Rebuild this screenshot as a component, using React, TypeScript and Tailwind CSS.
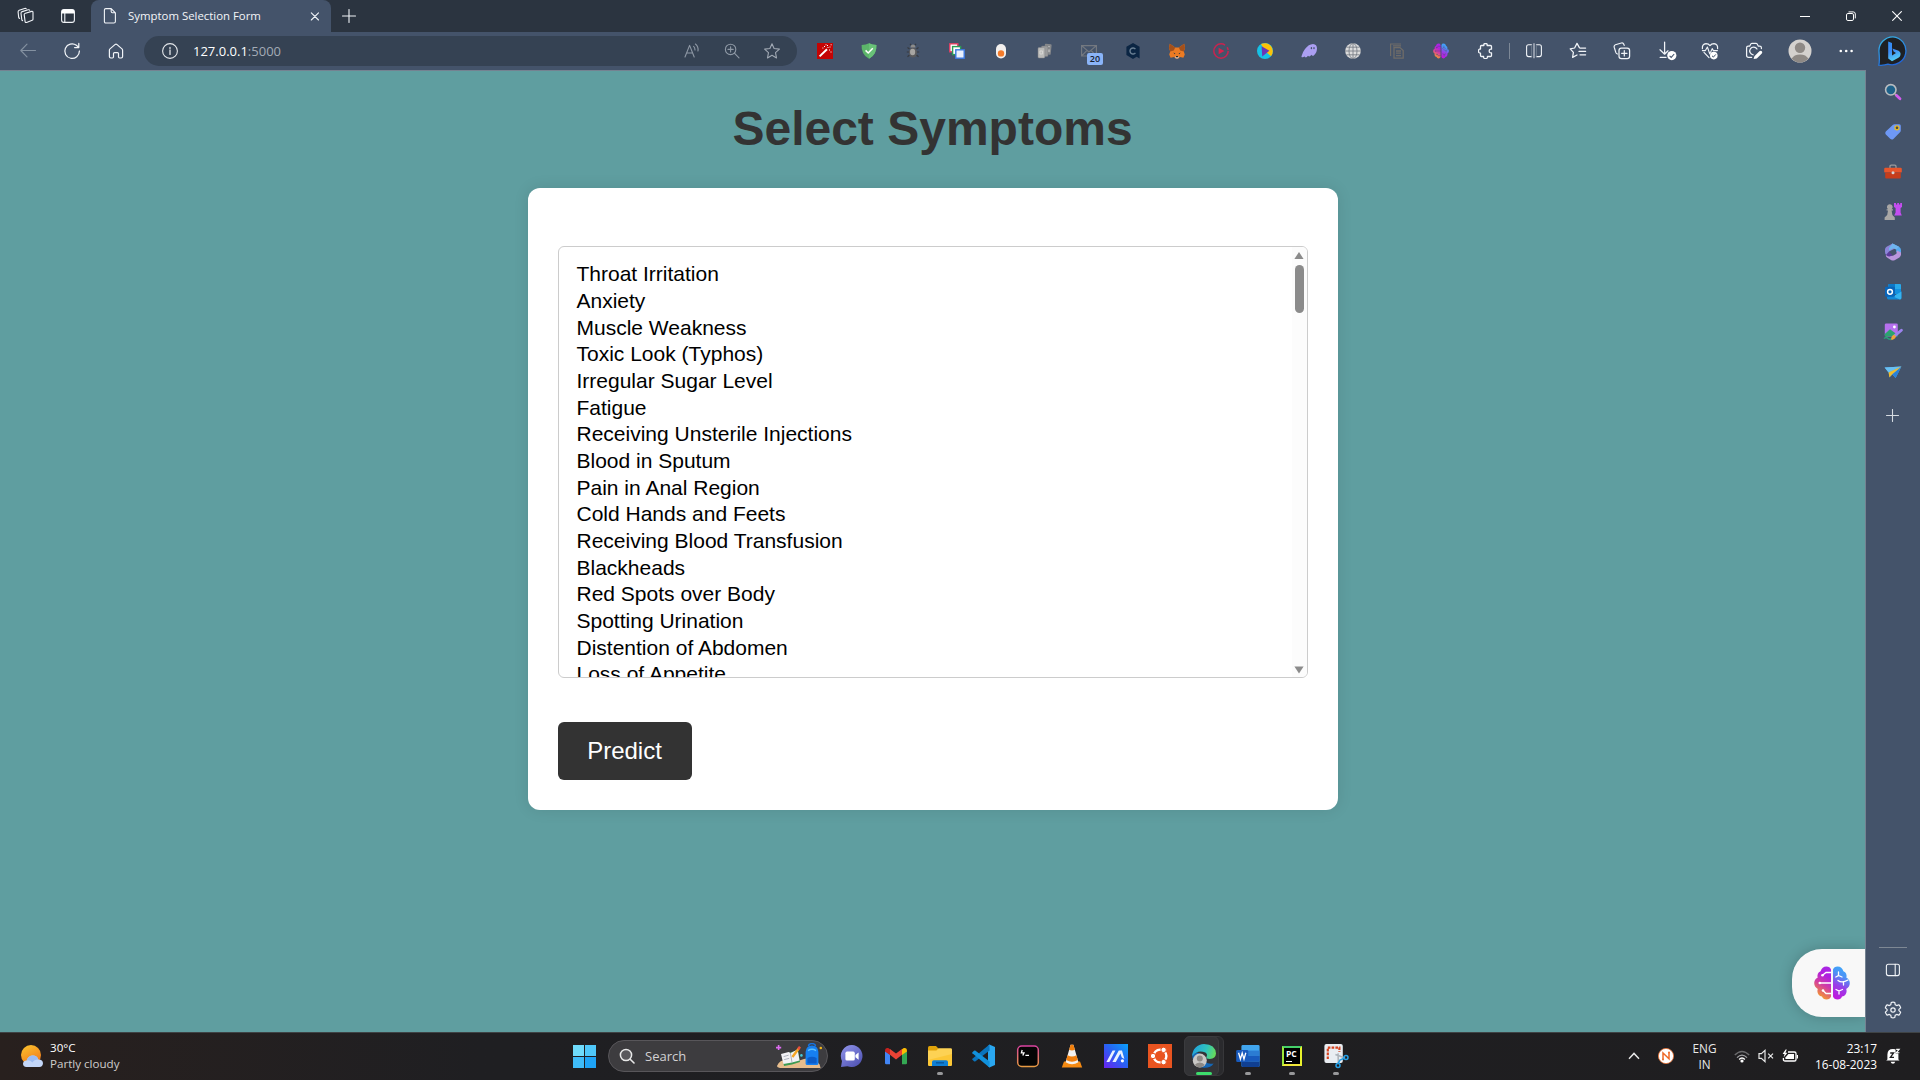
import React from "react";

type SvgProps = { w: number; h?: number; vb?: string; className?: string; children: React.ReactNode };

function Svg({ w, h = w, vb, className = "", children }: SvgProps) {
  return (
    <svg width={w} height={h} viewBox={vb ?? `0 0 ${w} ${h}`} fill="none" className={`block shrink-0 ${className}`}>
      {children}
    </svg>
  );
}

const line = { stroke: "#f1f4f8", strokeWidth: 1.1, strokeLinecap: "round" as const, strokeLinejoin: "round" as const };

function Cell({ children, className = "w-11" }: { children?: React.ReactNode; className?: string }) {
  return <div className={`flex h-full shrink-0 items-center justify-center ${className}`}>{children}</div>;
}

function TabBar() {
  return (
    <div className="flex h-8 shrink-0 items-stretch bg-[#2b3440]">
      <div className="flex w-[91px] items-center pl-[17px]">
        <Svg w={18}>
          <g {...line}>
            <path d="M8.5 6.2 L14.6 4.4 Q16 4 16 5.4 V12.2 Q16 13 15.2 13.3 L9.6 15.4 Q8.3 15.8 8.1 14.6 L7.2 7.6 Q7.2 6.6 8.5 6.2Z" />
            <path d="M5.6 13.6 Q4.9 13.4 4.8 12.6 L4 6.2 Q4 5 5.2 4.6 L11.2 2.8 Q12.4 2.5 12.7 3.2" />
            <path d="M2.6 11.4 Q1.8 11.2 1.7 10.4 L1.1 5 Q1 3.8 2.2 3.3 L7.6 1.5 Q8.8 1.2 9.2 1.8" />
          </g>
        </Svg>
        <Svg w={16} className="ml-[25px]">
          <rect x="1.6" y="1.6" width="12.8" height="12.8" rx="2.4" {...line} />
          <path d="M1.6 5.5V4Q1.6 1.6 4 1.6H12Q14.4 1.6 14.4 4V5.5Z" fill="#fff" />
          <path d="M4.8 5V14" {...line} />
        </Svg>
      </div>
      <div className="flex w-[240px] items-center rounded-t-lg bg-[#44536a] pr-[10px] pl-3">
        <Svg w={14} h={18}>
          <path d="M2.8 1.6H8.2L12.4 5.8V14.4Q12.4 16 10.8 16H2.8Q1.4 16 1.4 14.6V3Q1.4 1.6 2.8 1.6ZM8.2 1.6V4.6Q8.2 5.8 9.4 5.8H12.4" {...line} />
        </Svg>
        <span className="ml-[11px] grow text-[11.4px] leading-4 whitespace-nowrap text-[#f3f5f8]">Symptom Selection Form</span>
        <Svg w={12}>
          <path d="M2.3 2.8L9.5 10M9.5 2.8L2.3 10" {...line} />
        </Svg>
      </div>
      <Cell className="w-[35px]">
        <Svg w={14}>
          <path d="M7 .5V13.5M.5 7H13.5" {...line} />
        </Svg>
      </Cell>
      <div className="grow" />
      <Cell className="w-[46px]">
        <Svg w={10}><path d="M0 5.5H10" stroke="#fff" /></Svg>
      </Cell>
      <Cell className="w-[46px]">
        <Svg w={10}>
          <rect x=".5" y="2.5" width="7" height="7" rx="1.4" stroke="#fff" />
          <path d="M2.5 .9H7.2Q9.3 .9 9.3 3V7.4" stroke="#fff" />
        </Svg>
      </Cell>
      <Cell className="w-[46px]">
        <Svg w={10}><path d="M.3 .3L9.7 9.7M9.7 .3L.3 9.7" stroke="#fff" strokeWidth="1.1" /></Svg>
      </Cell>
    </div>
  );
}

function Brain({ size }: { size: number }) {
  const id = `brain${size}`;
  const small = size < 20;
  return (
    <Svg w={size} vb="0 0 36 34">
      <defs>
        <linearGradient id={`${id}a`} x1="4" y1="30" x2="22" y2="2" gradientUnits="userSpaceOnUse">
          <stop stopColor="#f59a2c" />
          <stop offset=".35" stopColor="#d33fa0" />
          <stop offset=".65" stopColor="#b01fe0" />
          <stop offset="1" stopColor="#a52be6" />
        </linearGradient>
        <linearGradient id={`${id}b`} x1="18" y1="30" x2="32" y2="4" gradientUnits="userSpaceOnUse">
          <stop stopColor="#c018dc" />
          <stop offset=".4" stopColor="#9a3de8" />
          <stop offset=".75" stopColor="#4d92f5" />
          <stop offset="1" stopColor="#3fa4fa" />
        </linearGradient>
      </defs>
      <path d="M17 3.5V30.5Q16 33.5 12.5 33.6Q9 33.5 8 30.5Q3.6 29.8 3.4 25.2Q3.4 24 3.8 23Q.2 20.8 .2 17Q.4 13 3.6 11.8Q2.6 7 6.6 5.2Q8 .5 12.4 .4Q16 .5 17 3.5Z" fill={`url(#${id}a)`} />
      <path d="M19 3.5V30.5Q20 33.5 23.5 33.6Q27 33.5 28 30.5Q32.4 29.8 32.6 25.2Q32.6 24 32.2 23Q35.8 20.8 35.8 17Q35.6 13 32.4 11.8Q33.4 7 29.4 5.2Q28 .5 23.6 .4Q20 .5 19 3.5Z" fill={`url(#${id}b)`} />
      <g stroke={small ? "#44536a" : "#fff"} strokeWidth={1.3} strokeLinecap="round" opacity={small ? 0.7 : 1}>
        <path d="M17 6.5H12L8.5 9.3M17 17H6M17 27.5H12L9 24.5" />
        <path d="M24.5 6V9.5L21.8 11M24.5 9.5L28 11M24 14.5Q28 17.5 34 14M29.5 16V19M22 23.5L25 25L28.5 23.5M25 25V28" />
      </g>
      <g fill={small ? "#44536a" : "#fff"} opacity={small ? 0.7 : 1}>
        <circle cx="8.5" cy="9.3" r="1.3" /><circle cx="5.8" cy="17" r="1.3" /><circle cx="9" cy="24.5" r="1.3" />
      </g>
    </Svg>
  );
}

function Extensions() {
  return (
    <>
      <Cell>
        <Svg w={16}>
          <rect width="16" height="16" fill="#c40404" />
          <path d="M2.6 13.4L10 6.2" stroke="#fff" strokeWidth="2" />
          <path d="M7 3.5h1M10 2.5h1M12.5 4h1M12 7h1M13.5 9h1M5.4 5h1M10.5 4.5h1M8.5 1.8h1M13.6 1.8h1" stroke="#fff" />
        </Svg>
      </Cell>
      <Cell>
        <Svg w={16}>
          <path d="M8 .3Q11 1.8 15.4 2Q16 11.5 8 15.8Q0 11.5 .6 2Q5 1.8 8 .3Z" fill="#5cb56a" />
          <path d="M8 .3Q11 1.8 15.4 2Q16 11.5 8 15.8Z" fill="#69c178" />
          <path d="M4.6 7.4L7.2 10L11.8 5.2" stroke="#fff" strokeWidth="1.5" />
        </Svg>
      </Cell>
      <Cell>
        <Svg w={16}>
          <path d="M4.5 6L2.5 4.5M4 9H1.8M4.5 12L2.5 13.8M11.5 6L13.5 4.5M12 9H14.2M11.5 12L13.5 13.8M6 2L5 .8M10 2L11 .8" stroke="#383b40" strokeWidth="1.2" />
          <ellipse cx="8" cy="9.6" rx="4" ry="5" fill="#5a5a5c" />
          <ellipse cx="7.6" cy="9" rx="2.6" ry="3.2" fill="#a7a5a2" />
          <path d="M5.4 4.4Q5.8 1.4 8 1.4Q10.2 1.4 10.6 4.4Z" fill="#8d8c8a" />
        </Svg>
      </Cell>
      <Cell>
        <Svg w={16}>
          <rect x=".8" y=".8" width="8" height="8" fill="#fff" stroke="#e23d62" strokeWidth="1.4" />
          <rect x="3.6" y="3.6" width="8" height="8" fill="#fff" stroke="#2c9c56" strokeWidth="1.4" />
          <rect x="6.8" y="6.8" width="8.4" height="8.4" fill="#e9f0fd" stroke="#3b78e0" strokeWidth="1.4" />
        </Svg>
      </Cell>
      <Cell>
        <Svg w={16}>
          <rect x="3" y="1" width="10" height="14.4" rx="5" fill="#f3f0ee" />
          <circle cx="8" cy="10.4" r="3.2" fill="#f47b2a" />
        </Svg>
      </Cell>
      <Cell>
        <Svg w={16}>
          <rect x="7.4" y="1" width="6.8" height="10.5" rx="1" fill="#85878a" transform="rotate(6 10 6)" />
          <rect x="4.4" y="3" width="6.6" height="10.5" rx="1" fill="#9a9b9c" stroke="#717479" strokeWidth=".5" />
          <rect x="1" y="4.6" width="6.8" height="10.4" rx="1" fill="#bbbbb9" stroke="#818386" strokeWidth=".5" />
          <path d="M3 8h2.6v3H3zM12 3v1.2M12 6.4v2.8" stroke="#d7d6d4" />
        </Svg>
      </Cell>
      <Cell>
        <div className="relative h-4 w-4">
          <Svg w={16}>
            <path d="M.6 2.6H15.4V13H.6ZM.6 2.6L8 9L15.4 2.6M.6 13L6 7.4M15.4 13L10 7.4" stroke="#737880" strokeWidth="1.2" />
          </Svg>
          <div className="absolute top-[10px] left-[6px] flex h-3 w-4 items-center justify-center rounded-xs bg-[#8ab4f8] text-[9px] leading-3 font-semibold text-[#16202e]">
            20
          </div>
        </div>
      </Cell>
      <Cell>
        <Svg w={16}>
          <path d="M8 0L14.6 3.8V15.6L11.6 13.8L8 16L1.4 12V3.8Z" fill="#0b2543" />
          <path d="M10.4 6.2A3 3 0 1 0 10.4 9.8" stroke="#6b8094" strokeWidth="1.4" />
        </Svg>
      </Cell>
      <Cell>
        <Svg w={16}>
          <path d="M.8 .8L6.2 4.6H9.8L15.2 .8L16 5L14.8 8.4L15.8 11.4L14.4 14.8L11 14L9.2 15.6H6.8L5 14L1.6 14.8L.2 11.4L1.2 8.4L0 5Z" fill="#ec7b23" />
          <path d="M.8 .8L6.2 4.6L4.8 7.6L1.2 8.4L0 5ZM15.2 .8L9.8 4.6L11.2 7.6L14.8 8.4L16 5Z" fill="#a3501b" />
          <path d="M4.4 9.4L6.4 10.4L5.6 11.2ZM11.6 9.4L9.6 10.4L10.4 11.2Z" fill="#233447" />
          <path d="M6.6 13.2H9.4L9.8 14.8L9 15.6H7L6.2 14.8Z" fill="#d5c4b6" />
          <path d="M6.9 13H9.1L8.8 14.2H7.2Z" fill="#222" />
        </Svg>
      </Cell>
      <Cell>
        <Svg w={16}>
          <circle cx="8" cy="8" r="7.2" stroke="#c8234f" strokeWidth="1.5" strokeDasharray="38 3 3 2" />
          <path d="M5.6 4.8L11.4 8L5.6 11.2Z" fill="#d9204c" />
        </Svg>
      </Cell>
      <Cell>
        <Svg w={16}>
          <circle cx="8" cy="8" r="8" fill="#16c1e6" />
          <path d="M4 1.1A8 8 0 0 1 14 13.2L9 9L5 3Z" fill="#fcc208" />
          <path d="M4.6 3.2L12.4 7.8L5.2 13.4Z" fill="#6a35b5" />
        </Svg>
      </Cell>
      <Cell>
        <Svg w={16}>
          <path d="M.4 13.4Q1.6 9 4 6Q7.6 1.2 12 1Q16 1.4 16 5.6Q15.8 10 12.8 12.4Q11.2 13.2 10.4 11.8Q8.6 14.4 7 12.8Q4.8 15.6 3.6 13.6Q1 15 .4 13.4Z" fill="#ab9ff2" />
          <ellipse cx="10.4" cy="5.2" rx=".7" ry="1.1" fill="#44536a" /><ellipse cx="13" cy="5.2" rx=".7" ry="1.1" fill="#44536a" />
        </Svg>
      </Cell>
      <Cell>
        <Svg w={16}>
          <circle cx="8" cy="8" r="7.8" fill="#dcdcdc" />
          <path d="M0 8H16M8 0V16M1.4 4.2H14.6M1.4 11.8H14.6" stroke="#7b8088" strokeWidth=".9" />
          <ellipse cx="8" cy="8" rx="4" ry="7.6" stroke="#7b8088" strokeWidth=".9" />
        </Svg>
      </Cell>
      <Cell>
        <Svg w={16}>
          <path d="M1.6 13V1H12M4 2.8H12" stroke="#6f6c68" strokeWidth="1.2" />
          <path d="M5 4.6H11L14.2 7.6V15.2H5ZM7 8H12M7 10.2H12M7 12.6H12" stroke="#6f6c68" strokeWidth="1.3" />
        </Svg>
      </Cell>
      <Cell><Brain size={16} /></Cell>
      <Cell>
        <Svg w={16} className="ml-[2px]">
          <path d="M3.4 2.5H5.9Q5.4 .5 7.5 .5Q9.6 .5 9.1 2.5H12.4Q13.5 2.5 13.5 3.6V6.2Q11.2 5.8 11.2 8Q11.2 10.2 13.5 9.8V12.4Q13.5 13.5 12.4 13.5H9.4Q9.8 15.6 7.5 15.6Q5.2 15.6 5.6 13.5H3.5Q2.5 13.5 2.5 12.4V10.2Q.5 10.2 .5 8Q.5 5.8 2.5 6V3.5Q2.5 2.5 3.4 2.5Z" {...line} strokeWidth="1.3" />
        </Svg>
      </Cell>
    </>
  );
}

function Toolbar() {
  return (
    <div className="flex h-[38px] shrink-0 items-center bg-[#44536a] pl-[6px]">
      <Cell>
        <Svg w={16}><path d="M15.5 7.5H.8M7 1.2L.8 7.5L7 13.8" {...line} stroke="#8491a1" /></Svg>
      </Cell>
      <Cell>
        <Svg w={18}>
          <path d="M16.4 9A7.3 7.3 0 1 1 13.4 3.2L15.6 5.4M15.8 1.4V5.6H11.6" {...line} strokeWidth="1.25" />
        </Svg>
      </Cell>
      <Cell>
        <Svg w={16}>
          <path d="M1.4 7.2Q1.4 6.4 2 5.9L7.2 1.4Q8 .8 8.8 1.4L14 5.9Q14.6 6.4 14.6 7.2V13.6Q14.6 15 13.2 15H11.6Q10.5 15 10.5 13.8V10.6Q10.5 9.6 9.5 9.6H6.5Q5.5 9.6 5.5 10.6V13.8Q5.5 15 4.4 15H2.8Q1.4 15 1.4 13.6Z" {...line} strokeWidth="1.2" />
        </Svg>
      </Cell>
      <div className="mx-[6px] flex h-[30px] w-[653px] shrink-0 items-center rounded-full bg-[#354253] pr-[5px] pl-[17px]">
        <Svg w={18}>
          <circle cx="9" cy="9" r="7.4" {...line} stroke="#e4e7eb" />
          <path d="M9 8V12.4M9 5.4V6.4" {...line} stroke="#e4e7eb" strokeWidth="1.3" />
        </Svg>
        <div className="ml-[14px] grow text-[13px] leading-4 text-white">
          127.0.0.1<span className="text-[#a3abb6]">:5000</span>
        </div>
        <Cell className="w-10">
          <Svg w={16}>
            <path d="M1 14L5.6 2.4L10.2 14M2.6 10H8.6" {...line} stroke="#8e98a5" />
            <path d="M9.6 3.4Q11 4.6 11 7M11.4 1Q14.6 3.4 14 8" {...line} stroke="#8e98a5" />
          </Svg>
        </Cell>
        <Cell className="w-10">
          <Svg w={16}>
            <circle cx="6.6" cy="6.4" r="5.2" {...line} stroke="#8e98a5" />
            <path d="M10.4 10.2L15 14.8M6.6 3.8V9M4 6.4H9.2" {...line} stroke="#8e98a5" />
          </Svg>
        </Cell>
        <Cell className="w-10">
          <Svg w={18}>
            <path d="M9 1.8L11.1 6.5L16.4 7.1L12.5 10.7L13.5 15.9L9 13.3L4.5 15.9L5.5 10.7L1.6 7.1L6.9 6.5Z" {...line} stroke="#a0a8b3" />
          </Svg>
        </Cell>
      </div>
      <Extensions />
      <Cell className="w-[5px]"><div className="h-4 w-px bg-[#7d8896]" /></Cell>
      <Cell>
        <Svg w={16}>
          <path d="M5.6 1.8H2.6Q.6 1.8 .6 3.8V11.6Q.6 13.6 2.6 13.6H5.6M10.4 1.8H13.4Q15.4 1.8 15.4 3.8V11.6Q15.4 13.6 13.4 13.6H10.4" {...line} stroke="#f1f4f8" />
          <path d="M5.6 1.8V13.6M10.4 1.8V13.6" stroke="#6d7a8c" />
          <path d="M8 .2V15.2" stroke="#c6ccd5" strokeWidth="1.2" />
        </Svg>
      </Cell>
      <Cell>
        <Svg w={18}>
          <path d="M10.4 5.6L8 1.4L5.6 6L1.2 6.8L4.4 10.3L3.6 15.4L8 13" {...line} strokeWidth="1.25" />
          <path d="M11 6H16.6M10 9.4H16.6M11 12.8H16.6" {...line} strokeWidth="1.25" />
        </Svg>
      </Cell>
      <Cell>
        <Svg w={18}>
          <rect x="6" y="6" width="10.6" height="10.6" rx="2.4" {...line} strokeWidth="1.25" />
          <path d="M11.3 8.6V14M8.6 11.3H14M4.4 12Q3.2 11.6 2.8 10.4L1.2 5.2Q.8 3.4 2.4 2.8L8.4 1Q10.2 .6 10.8 2.2L11.2 3.4" {...line} strokeWidth="1.2" />
        </Svg>
      </Cell>
      <Cell>
        <Svg w={18} h={20} className="ml-1">
          <path d="M5.6 1V13M1 8.8L5.6 13.2L9 9.8M1.2 16.4H7" {...line} strokeWidth="1.25" />
          <circle cx="12.8" cy="14.6" r="4.6" fill="#fff" />
          <path d="M10.6 14.8L12.2 16.4L15.2 13" stroke="#44536a" strokeWidth="1.1" />
        </Svg>
      </Cell>
      <Cell>
        <Svg w={18}>
          <path d="M1.4 6.6Q1 2 5 1.6Q7.6 1.6 9 3.6Q10.4 1.6 13 1.6Q17 2 16.6 6.6M3 10.4L8 15.6" {...line} strokeWidth="1.2" />
          <path d="M1.4 8.6H4.4L6.4 5L8.8 12L11.2 6.6L12.4 8.6H16.4" {...line} strokeWidth="1.1" />
          <circle cx="12.8" cy="13.6" r="3.8" fill="#fff" />
          <path d="M11 13.8L12.4 15.1L14.8 12.4" stroke="#44536a" />
        </Svg>
      </Cell>
      <Cell>
        <Svg w={18}>
          <path d="M6.6 15.4H3.6Q1.6 15.4 1.6 13.4V5.8Q1.6 4.2 3.2 4.2H4.6L6 1.8Q6.3 1.3 7 1.3H11Q11.7 1.3 12 1.8L13.4 4.2H14.6Q16.4 4.2 16.4 5.8V6.6" {...line} strokeWidth="1.25" />
          <path d="M12 7A3.9 3.9 0 1 0 8.2 12.8" {...line} strokeWidth="1.25" />
          <path d="M8.6 17L9.4 14.2L14.4 9.2Q15.8 8.2 16.8 9.2Q17.8 10.2 16.8 11.6L11.8 16.4Z" fill="#fff" />
        </Svg>
      </Cell>
      <Cell className="w-12">
        <Svg w={24}>
          <circle cx="12" cy="12" r="11.5" fill="#d4d1ce" />
          <circle cx="12" cy="8.8" r="5.2" fill="#8e8985" />
          <path d="M3.6 19.8Q6 15.4 12 15.4Q18 15.4 20.4 19.8Q17 23.5 12 23.5Q7 23.5 3.6 19.8Z" fill="#8e8985" />
        </Svg>
      </Cell>
      <Cell>
        <Svg w={14} h={4}>
          <circle cx="1.8" cy="2" r="1.3" fill="#fff" /><circle cx="7.2" cy="2" r="1.3" fill="#fff" /><circle cx="12.6" cy="2" r="1.3" fill="#fff" />
        </Svg>
      </Cell>
      <Cell className="w-[50px]">
        <Svg w={30}>
          <defs>
            <linearGradient id="bingRing" x1="6" y1="0" x2="20" y2="30" gradientUnits="userSpaceOnUse">
              <stop stopColor="#38b6e8" /><stop offset="1" stopColor="#1f5fd8" />
            </linearGradient>
            <linearGradient id="bingB" x1="10" y1="5" x2="18" y2="25" gradientUnits="userSpaceOnUse">
              <stop stopColor="#2f8cf5" /><stop offset=".5" stopColor="#3f8cf4" /><stop offset="1" stopColor="#58d6f5" />
            </linearGradient>
          </defs>
          <path d="M15 .8A14 14 0 1 1 10 28.2Q6 29.6 .8 29.2Q1.8 26 1 16A14 14 0 0 1 15 .8Z" fill="#1e2024" stroke="url(#bingRing)" strokeWidth="1.3" />
          <path d="M10.2 5.4L14 7V19.4L18 17L15.6 15.6L14.4 12.4L20.6 14.8Q23.2 16.4 22.4 19.2Q22 20.8 20.4 21.8L14 25.2L10.2 22.6Z" fill="url(#bingB)" />
        </Svg>
      </Cell>
    </div>
  );
}

function Sidebar() {
  return (
    <div className="flex w-[54px] shrink-0 flex-col items-center bg-[#44536a] pt-[2px] pr-px">
      <Cell className="h-10! w-full">
        <Svg w={18}>
          <path d="M11 11L13 13" stroke="#b8b5b0" strokeWidth="2" />
          <path d="M12.6 12.6L16 15.8" stroke="#d45cf0" strokeWidth="2.8" strokeLinecap="round" />
          <circle cx="6.8" cy="6.8" r="5.2" fill="#1f628a" stroke="#b9bcc0" strokeWidth="1.6" />
        </Svg>
      </Cell>
      <Cell className="h-10! w-full">
        <Svg w={18}>
          <path d="M9 1.8Q9.6 1.2 10.6 1.2H15.2Q16.8 1.2 16.8 2.8V7.4Q16.8 8.4 16 9.2L9.4 15.9Q7.8 17.2 6.2 15.8L1.8 11.4Q.6 9.8 1.8 8.4Z" fill="#6e98f5" />
          <circle cx="13" cy="4.8" r="2" fill="#4a4a44" stroke="#e9bb23" strokeWidth="1.3" />
        </Svg>
      </Cell>
      <Cell className="h-10! w-full">
        <Svg w={18}>
          <path d="M6 5V3.4Q6 2.2 7.2 2.2H10.8Q12 2.2 12 3.4V5" stroke="#9b9b9b" strokeWidth="1.3" />
          <rect x=".2" y="4.8" width="17.6" height="4.8" rx="1.2" fill="#e9552b" />
          <path d="M1.2 9.6H16.8V14.4Q16.8 15.4 15.8 15.4H2.2Q1.2 15.4 1.2 14.4Z" fill="#c63d1b" />
          <circle cx="9" cy="9.8" r="1.5" fill="#d5d5d5" />
        </Svg>
      </Cell>
      <Cell className="h-10! w-full">
        <Svg w={18}>
          <path d="M10 0H12V1.6H13.2V0H15V1.6H16.2V0H18V4L16.6 5V9.6L17.8 12.6H10.2L11.6 9.6V5L10 4Z" fill="#c44df0" />
          <path d="M5.8 1.2A2.8 2.8 0 0 1 7.6 6.2H9V7.6H7.6L8.4 12L10.8 14.6V17H.6V14.6L3.2 12L4 7.6H2.6V6.2H4A2.8 2.8 0 0 1 5.8 1.2Z" fill="#a9a7a5" />
        </Svg>
      </Cell>
      <Cell className="h-10! w-full">
        <Svg w={18}>
          <path d="M8.4 .4L15 3.8Q17 5 17 7V11.6L12.2 9V6.4L8.4 4.4Z" fill="#56a9ee" />
          <path d="M8.6 .4L12 5L5 8.4V13.2L2.6 12.2Q1 11.2 1 9V6.6Q1 4.8 2.6 3.8Z" fill="#8c85d8" />
          <path d="M8.6 .4L15 3.8L12.2 6.4L9.6 5.2L5 7.6V5Z" fill="#6fb4ee" />
          <path d="M17 9.6V11.6Q17 13.4 15.4 14.4L10.6 17.2Q9 18 7.4 17.2L3.4 14.8Q1.4 13.4 2 12L9 12.8L12.4 10.8L13 7.6Z" fill="#b995dc" />
          <path d="M5 8.4L2 12Q3.4 13.6 5.4 13.4L8.6 12.6Z" fill="#5b3b9c" />
        </Svg>
      </Cell>
      <Cell className="h-10! w-full">
        <Svg w={18}>
          <rect x="4.4" y="1" width="12.6" height="10" rx="1" fill="#28a8ea" />
          <path d="M4.4 1H11V6H4.4Z" fill="#0c78c8" /><path d="M11 6H17V11H11Z" fill="#1490df" />
          <path d="M3 8.4L10.4 12.4L17.4 8.4V15Q17.4 16.4 16 16.4H4.4Q3 16.4 3 15Z" fill="#1287d6" />
          <path d="M17.4 8.4L9 13.4L16 16.4Q17.4 16.4 17.4 15Z" fill="#35b3f0" />
          <rect x="1" y="3.8" width="10" height="10" rx="1" fill="#0a64b8" />
          <circle cx="6" cy="8.8" r="2.4" stroke="#fff" strokeWidth="1.5" />
        </Svg>
      </Cell>
      <Cell className="h-10! w-full">
        <Svg w={20} h={18}>
          <rect x="1.8" y=".4" width="13" height="13" rx="1.4" fill="#b570ee" />
          <path d="M1.8 11L7 6.2L14.8 12V13.4H1.8Z" fill="#2ba36f" />
          <circle cx="11.4" cy="4" r="1.4" fill="#fff" />
          <path d="M12.2 12.4L18.4 7.2" stroke="#9c83ee" strokeWidth="2.8" strokeLinecap="round" />
          <path d="M8 15.4Q8.6 12.4 11 11.4L13 13.6Q12 16.8 7.6 17.2Z" fill="#eda33a" />
          <path d="M1 15.6Q3 13.4 5 15.4Q6.4 16.8 8.4 16" stroke="#27a278" strokeWidth="1.4" />
        </Svg>
      </Cell>
      <Cell className="h-10! w-full">
        <Svg w={18}>
          <path d="M.6 4.6L17.4 3.6L11.6 15L8.4 11.4L5.6 14.2L4.6 9.4Z" fill="#4ea8ee" />
          <path d="M17.4 3.6L11.6 15L8.2 11.2Z" fill="#2a81d8" />
          <path d="M.6 4.6L17.4 3.6L4.6 9.4Z" fill="#69c0f2" />
          <path d="M17.4 3.6L4.6 9.4L5.4 14.4L8.2 11.2Z" fill="#f2bd2b" />
        </Svg>
      </Cell>
      <Cell className="mt-[3px] h-10! w-full">
        <Svg w={13}><path d="M6.5 .5V12.5M.5 6.5H12.5" {...line} stroke="#d6dbe1" /></Svg>
      </Cell>
      <div className="grow" />
      <div className="mb-[2px] h-px w-7 bg-[#7e8894]" />
      <Cell className="h-10! w-full">
        <Svg w={16} h={14}>
          <rect x="1.4" y="1.2" width="13" height="11.4" rx="2" {...line} />
          <path d="M10.2 1.2V12.6" {...line} />
        </Svg>
      </Cell>
      <Cell className="mb-[2px] h-10! w-full">
        <Svg w={18} vb="0 0 24 24">
          <path d="M12 1.4Q13.6 1.4 14.4 2L14.9 4.9L17 6.1L19.8 5Q21.6 6.8 22.2 9.2L19.9 11.2V12.8L22.2 14.8Q21.6 17.2 19.8 19L17 17.9L14.9 19.1L14.4 22Q12 22.8 9.6 22L9.1 19.1L7 17.9L4.2 19Q2.4 17.2 1.8 14.8L4.1 12.8V11.2L1.8 9.2Q2.4 6.8 4.2 5L7 6.1L9.1 4.9L9.6 2Q10.4 1.4 12 1.4Z" {...line} strokeWidth="1.6" />
          <circle cx="12" cy="12" r="2.9" {...line} strokeWidth="1.6" />
        </Svg>
      </Cell>
    </div>
  );
}

const symptoms = [
  "Throat Irritation", "Anxiety", "Muscle Weakness", "Toxic Look (Typhos)", "Irregular Sugar Level", "Fatigue",
  "Receiving Unsterile Injections", "Blood in Sputum", "Pain in Anal Region", "Cold Hands and Feets",
  "Receiving Blood Transfusion", "Blackheads", "Red Spots over Body", "Spotting Urination", "Distention of Abdomen",
  "Loss of Appetite",
];

function Page() {
  return (
    <main className="relative flex grow flex-col items-center overflow-hidden bg-[#5f9ea0] font-['Liberation_Sans',Arial,sans-serif]">
      <h1 className="mt-[30px] text-5xl leading-[55px] font-bold text-[#333]">Select Symptoms</h1>
      <form className="mt-8 flex h-[622px] w-[810px] flex-col items-start rounded-xl bg-white px-[30px] pt-[58px] shadow-[0_0_15px_rgba(0,0,0,0.1)]">
        <div className="flex h-[432px] w-full overflow-hidden rounded-md border border-[#ccc] bg-white">
          <ul className="grow pt-[14.4px] pl-[18px] text-[21px] text-black">
            {symptoms.map((s) => (
              <li key={s} className="h-[26.67px] leading-[26.67px] whitespace-nowrap">{s}</li>
            ))}
          </ul>
          <div className="flex w-[15px] flex-col items-center bg-[#fcfcfc] pt-[4px] pb-[3px]">
            <Svg w={10} h={9}><path d="M5 1L9.6 8H.4Z" fill="#8b8b8b" /></Svg>
            <div className="mt-[5px] h-12 w-[9px] rounded-full bg-[#8b8b8b]" />
            <div className="grow" />
            <Svg w={10} h={8}><path d="M5 7.6L9.6 .6H.4Z" fill="#8b8b8b" /></Svg>
          </div>
        </div>
        <button type="button" className="mt-11 h-[58px] w-[134px] rounded-md bg-[#333] text-2xl text-white">Predict</button>
      </form>
      <div className="absolute right-0 bottom-[15px] flex h-[68px] w-[73px] items-center rounded-l-[30px] bg-[#f8f8f8] pl-[22px] shadow-[0_0_14px_rgba(0,0,0,0.2)]">
        <Brain size={36} />
      </div>
    </main>
  );
}

function TaskApp({ children, running = false }: { children: React.ReactNode; running?: boolean }) {
  return (
    <div className="relative flex h-full w-11 shrink-0 items-center justify-center">
      {children}
      {running && <div className="absolute bottom-[5px] h-[3px] w-[6px] rounded-full bg-[#98989a]" />}
    </div>
  );
}

function TaskApps() {
  return (
    <>
      <TaskApp>
        <Svg w={24}>
          <defs><linearGradient id="chat" x1="4" y1="2" x2="20" y2="22" gradientUnits="userSpaceOnUse"><stop stopColor="#8b8fe6" /><stop offset="1" stopColor="#4f52b2" /></linearGradient></defs>
          <path d="M12 1A11 11 0 1 1 7.4 22.2L1 23L2 17A11 11 0 0 1 12 1Z" fill="url(#chat)" />
          <rect x="5.4" y="7.6" width="9.4" height="9" rx="1.6" fill="#fff" />
          <path d="M15.4 11L18.6 8.4V15.8L15.4 13.2Z" fill="#fff" />
        </Svg>
      </TaskApp>
      <TaskApp>
        <Svg w={24} h={18}>
          <path d="M1 4V16Q1 17.2 2.2 17.2H6V7.6Z" fill="#4285f4" />
          <path d="M23 4V16Q23 17.2 21.8 17.2H18V7.6Z" fill="#34a853" />
          <path d="M6 7.8V2L12 6.6L18 2V7.8L12 12.4Z" fill="#ea4335" />
          <path d="M1 4Q1 .4 4.2 1L6 2.2V8L1 4.4Z" fill="#c5221f" />
          <path d="M23 4Q23 .4 19.8 1L18 2.2V8L23 4.4Z" fill="#fbbc04" />
        </Svg>
      </TaskApp>
      <TaskApp running>
        <Svg w={24}>
          <path d="M0 3.6Q0 2 1.6 2H8L10.4 4.4V8H0Z" fill="#e0a30a" />
          <path d="M0 6.4H8.4L10.6 4.2H22.6Q24 4.2 24 5.6V20.6Q24 22 22.6 22H1.4Q0 22 0 20.6Z" fill="#fdd254" />
          <path d="M0 16L24 10V20.6Q24 22 22.6 22H1.4Q0 22 0 20.6Z" fill="#fcc736" />
          <path d="M4 22V18Q4 16.2 5.8 16.2H18.2Q20 16.2 20 18V22Z" fill="#0f7fd4" />
          <path d="M8 18.8H16" stroke="#0b579a" strokeWidth="1.4" />
        </Svg>
      </TaskApp>
      <TaskApp>
        <Svg w={24}>
          <path d="M17.4 .4L23 3V21L17.4 23.6L16 22V2Z" fill="#2aa7f0" />
          <path d="M17.4 .4L17.6 6.6L3.2 17.4Q2.6 17.8 2 17.3L.4 15.8Q0 15.2 .4 14.7Z" fill="#0a74bd" />
          <path d="M17.4 23.6L17.6 17.4L3.2 6.6Q2.6 6.2 2 6.7L.4 8.2Q0 8.8 .4 9.3Z" fill="#1191dc" />
        </Svg>
      </TaskApp>
      <TaskApp>
        <Svg w={24}>
          <defs><linearGradient id="term" x1="0" y1="0" x2="0" y2="24" gradientUnits="userSpaceOnUse"><stop stopColor="#d83aa8" /><stop offset="1" stopColor="#e9a23c" /></linearGradient></defs>
          <rect x="1.7" y="2" width="20.6" height="20.4" rx="4" fill="#050505" stroke="url(#term)" strokeWidth="1.5" />
          <path d="M6.2 6L5.4 8.8H8L6.8 11.6M9.4 11.4H13" stroke="#fff" strokeWidth="1.3" />
        </Svg>
      </TaskApp>
      <TaskApp>
        <Svg w={24}>
          <path d="M4 17.4H20L22.2 23.4H1.8Z" fill="#f58a12" />
          <path d="M10.6 .8H13.4L18.4 18.2Q12 22.4 5.6 18.2Z" fill="#f4f1ee" />
          <path d="M10.6 .8H13.4L14.9 5.8Q12 7.2 9.1 5.8ZM7.6 11.2Q12 13.6 16.4 11.2L17.8 16Q12 19.6 6.2 16Z" fill="#f17f0c" />
        </Svg>
      </TaskApp>
      <TaskApp>
        <Svg w={24}>
          <defs><linearGradient id="prism" x1="0" y1="24" x2="24" y2="0" gradientUnits="userSpaceOnUse"><stop stopColor="#6a22f0" /><stop offset=".55" stopColor="#2565f4" /><stop offset="1" stopColor="#0aa2fa" /></linearGradient></defs>
          <rect width="24" height="24" fill="url(#prism)" />
          <path d="M2.4 18L8.6 6.6H11.4L5.4 18ZM8.4 18L14.8 6.6H18L11.8 18ZM16.4 9.6L18 6.6L20.4 15L17.8 13.6Z" fill="#e9f1ff" />
          <circle cx="18.4" cy="16.8" r="1.6" fill="#fff" />
        </Svg>
      </TaskApp>
      <TaskApp>
        <Svg w={24}>
          <rect width="24" height="24" fill="#e95420" />
          <circle cx="12" cy="12" r="6.4" stroke="#fff" strokeWidth="2.4" />
          <g fill="#fff" stroke="#e95420" strokeWidth="1"><circle cx="5" cy="12" r="2.7" /><circle cx="15.6" cy="5.9" r="2.7" /><circle cx="15.6" cy="18.1" r="2.7" /></g>
        </Svg>
      </TaskApp>
      <div className="relative flex h-full w-11 shrink-0 items-center justify-center">
        <div className="absolute top-1 left-[2px] h-10 w-10 rounded-md border border-[#37373a] bg-[#2a2a2d]" />
        <div className="absolute top-1 left-[2px] h-10 w-[35px] rounded-md border border-[#3b3b3e] bg-[#333336]" />
        <Svg w={26} className="relative">
          <defs>
            <linearGradient id="edge" x1="3" y1="5" x2="24" y2="12" gradientUnits="userSpaceOnUse"><stop stopColor="#22a5dc" /><stop offset=".55" stopColor="#2fc4be" /><stop offset="1" stopColor="#68dc58" /></linearGradient>
          </defs>
          <path d="M1.4 11.4A12 12 0 0 0 13.6 24.8Q20 24.8 22.6 20.4Q14 22 12 15Q11 10.6 6 9.6Z" fill="#1567b6" />
          <path d="M1.2 13A12 12 0 0 1 13 1Q24.4 1.4 25 10.6Q24.6 16 18.8 16Q14.8 15.8 15.4 14Q17 11.4 14.4 9.6Q7 6 1.2 13Z" fill="url(#edge)" />
          <circle cx="8.8" cy="17.6" r="7" fill="#c9c7c5" />
          <circle cx="8.8" cy="15.6" r="3" fill="#8d8985" />
          <path d="M3.8 22Q5.4 19.4 8.8 19.4Q12.2 19.4 13.8 22Q11.8 24.4 8.8 24.4Q5.8 24.4 3.8 22Z" fill="#8d8985" />
        </Svg>
        <div className="absolute bottom-[5px] h-[3px] w-4 rounded-full bg-[#3ddc6c]" />
      </div>
      <TaskApp running>
        <Svg w={24}>
          <rect x="5.4" y="1" width="18.2" height="22" rx="1.4" fill="#41a5ee" />
          <path d="M5.4 6.6H23.6V12H5.4Z" fill="#2b7cd3" /><path d="M5.4 12H23.6V17.4H5.4Z" fill="#185abd" />
          <path d="M5.4 17.4H23.6V21.6Q23.6 23 22.2 23H6.8Q5.4 23 5.4 21.6Z" fill="#103f91" />
          <rect x=".2" y="6" width="12" height="12" rx="1.2" fill="#185abd" />
          <path d="M2.6 8.8L4.4 15.2L6.2 9L8 15.2L9.8 8.8" stroke="#fff" strokeWidth="1.3" />
        </Svg>
      </TaskApp>
      <TaskApp running>
        <div className="flex h-5 w-5 flex-col justify-between border-2 border-t-[#45d06a] border-r-[#e8f22c] border-b-[#f3e83a] border-l-[#9be83a] bg-black px-[2px] pt-px pb-[2px]">
          <span className="font-['Open_Sans',sans-serif] text-[8.5px] leading-[9px] font-bold text-white">PC</span>
          <div className="h-px w-[6px] bg-white" />
        </div>
      </TaskApp>
      <TaskApp running>
        <Svg w={26}>
          <rect x="1.4" y="1" width="18.4" height="19" rx="2" fill="#e9edf2" />
          <path d="M4.8 16V4.6H16.4V9" stroke="#d6431f" strokeWidth="2.2" strokeDasharray="2.6 1.2" />
          <path d="M15 10.4L15.4 20.4M12.4 11.4L22 15" stroke="#aeb4bb" strokeWidth="1.6" />
          <circle cx="23" cy="14.6" r="2" stroke="#26a0e8" strokeWidth="1.5" />
          <circle cx="15" cy="22.4" r="2" stroke="#26a0e8" strokeWidth="1.5" />
          <path d="M15.2 20.4L17 17L21 15.2" stroke="#26a0e8" strokeWidth="1.6" />
        </Svg>
      </TaskApp>
    </>
  );
}

function SearchArt() {
  return (
    <Svg w={50} h={26} vb="0 0 50 26">
      <path d="M3 23Q6 15.4 16 17Q24 19 30 16Q40 13 45.6 21.4L46.6 25H8Q3.4 25 3 23Z" fill="#e7bd8c" />
      <path d="M8 12L16 9.4L24 7L26 19L18 21.6L10 23Z" fill="#3c9a52" />
      <path d="M7 11L14.6 9L16.6 10L23.6 6.4L25.6 17.6L18 19.6L9.4 21Z" fill="#f2f1f4" />
      <path d="M16.4 10L18 19.4M9.6 13.6L14.6 12.2M10.2 16.6L15.2 15.4" stroke="#9aa1ad" strokeWidth=".8" />
      <path d="M18.4 14L24.6 5.8" stroke="#f5a623" strokeWidth="2.4" /><path d="M24 6.4L26 3.8" stroke="#e9503c" strokeWidth="2.6" />
      <path d="M34.4 3.4Q34.6 .6 38 .6Q41.4 .6 41.6 3.4" stroke="#1673e0" strokeWidth="1.5" />
      <path d="M31.6 20.4V9Q32 2.4 38 2.4Q44 2.4 44.4 9V20.4Q44.4 22 42.8 22H33.2Q31.6 22 31.6 20.4Z" fill="#167ff0" />
      <path d="M33.4 15Q38 12.4 42.6 15V20.4H33.4Z" fill="#0c5cc8" /><path d="M34 7.6Q38 5 42 7.6" stroke="#5fc2fb" strokeWidth="1.4" />
      <path d="M4.6 2V7M2 4.6H7.2" stroke="#dd6cf0" strokeWidth="1.6" />
      <circle cx="27.4" cy="12.4" r="1.3" fill="#44c8d8" /><circle cx="46.8" cy="5" r="1.3" fill="#f2b61b" />
    </Svg>
  );
}

function Taskbar() {
  return (
    <footer className="flex h-12 shrink-0 items-center bg-linear-to-r from-[#28201e] via-[#1f1f22] via-25% to-[#1f1e20] text-[11.4px] leading-4 text-white shadow-[inset_0_1px_0_#3f4345]">
      <div className="flex w-[562px] items-center pl-5">
        <Svg w={24}>
          <defs><linearGradient id="sun" x1="6" y1="1" x2="16" y2="20" gradientUnits="userSpaceOnUse"><stop stopColor="#fbbf2c" /><stop offset="1" stopColor="#f0781a" /></linearGradient></defs>
          <circle cx="11" cy="11" r="10" fill="url(#sun)" />
          <path d="M6.4 23Q3 22.6 3 19.4Q3.4 16.4 6.6 16.4Q8.4 11.4 13 11.4Q17 11.6 18.4 15.4Q23 15.4 23 19.2Q22.8 22.8 19.4 23Z" fill="#c3d6f8" />
          <path d="M6.6 16.4Q8.4 11.4 13 11.4Q17 11.6 18.4 15.4Q14 15.4 12.4 18.4Q10 15.6 6.6 16.4Z" fill="#9dbcf2" />
        </Svg>
        <div className="ml-[6px] flex flex-col text-[11.6px] whitespace-nowrap">
          <span>30°C</span>
          <span className="text-[#cfcdcc]">Partly cloudy</span>
        </div>
      </div>
      <Cell className="w-[45px]">
        <div className="grid h-[23px] w-[23px] grid-cols-2 gap-px">
          <div className="bg-[#6fdcfc]" /><div className="bg-[#4fc8fa]" /><div className="bg-[#3fbcf9]" /><div className="bg-[#1ea4f7]" />
        </div>
      </Cell>
      <div className="mr-[2px] ml-px flex h-8 w-[220px] items-center rounded-full border border-[#58565a] bg-[#3d3c3f] pr-[3px] pl-[10px]">
        <Svg w={16}>
          <circle cx="7" cy="7" r="5.6" stroke="#e8e8e8" strokeWidth="1.5" fill="#59585c" />
          <path d="M11.2 11.2L15 15" stroke="#e8e8e8" strokeWidth="1.6" strokeLinecap="round" />
        </Svg>
        <span className="ml-[10px] grow text-[13px] text-[#d2d1d3]">Search</span>
        <SearchArt />
      </div>
      <TaskApps />
      <div className="grow" />
      <Cell className="w-8">
        <Svg w={12} h={8}><path d="M1 6.8L6 1.4L11 6.8" stroke="#e8e8e8" strokeWidth="1.4" /></Svg>
      </Cell>
      <Cell className="w-8">
        <Svg w={16}>
          <circle cx="8" cy="8" r="7.6" fill="#fff" stroke="#ef7433" strokeWidth=".8" />
          <path d="M5 11.6V5L11 10.8V4.4" stroke="#ee6a28" strokeWidth="1.5" />
          <circle cx="5" cy="11.6" r="1" fill="#ee6a28" /><circle cx="11" cy="4.6" r="1" fill="#ee6a28" />
        </Svg>
      </Cell>
      <div className="flex w-[45px] flex-col items-center text-[11.8px] text-[#e9e9e9]">
        <span>ENG</span>
        <span>IN</span>
      </div>
      <Cell className="w-7">
        <Svg w={16} h={13} className="mr-[-2px]">
          <path d="M.8 5Q8-2.2 15.2 5" stroke="#6b6b6d" strokeWidth="1.4" />
          <path d="M3 7.6Q8 2.6 13 7.6" stroke="#a2a2a4" strokeWidth="1.3" />
          <path d="M5.2 9.6Q8 6.6 10.8 9.6" stroke="#fff" strokeWidth="1.5" /><circle cx="8" cy="11" r="1.6" fill="#fff" />
        </Svg>
      </Cell>
      <Cell className="w-[22px]">
        <Svg w={16} h={14}>
          <path d="M1 4.6H3.4L7 1.4V12.6L3.4 9.4H1Z" stroke="#e8e8e8" strokeWidth="1.2" />
          <path d="M10.2 4.6L15 9.4M15 4.6L10.2 9.4" stroke="#e8e8e8" strokeWidth="1.2" />
        </Svg>
      </Cell>
      <Cell className="w-[25px]">
        <Svg w={16} h={14}>
          <path d="M6 3H12.4Q14 3 14 4.6V10.4Q14 12 12.4 12H3Q1.4 12 1.4 10.4V9" stroke="#fff" strokeWidth="1.3" />
          <path d="M6.4 5H12V10H3.4V8.6Z" fill="#fff" /><path d="M15.4 6V9.4" stroke="#fff" strokeWidth="1.3" />
          <path d="M3.6 .4L.6 5H2.6L1.6 8.6L5.4 3.8H3.4L4.8 .4Z" fill="#fff" />
        </Svg>
      </Cell>
      <div className="flex w-[75px] flex-col items-end text-[11.9px] whitespace-nowrap">
        <span>23:17</span>
        <span>16-08-2023</span>
      </div>
      <Cell className="w-[43px]">
        <Svg w={16} className="mr-[12px]">
          <path d="M2.4 11.4V6.4Q2.6 1 8 1Q13.2 1 13.4 6.4V11.4L14.6 12.6H1.2ZM5.6 13.8H10.2Q9.6 15.8 8 15.8Q6.2 15.8 5.6 13.8Z" fill="#fff" />
          <path d="M5.2 5H8.6L5.4 9.4H9" stroke="#1f1e20" strokeWidth="1.3" />
          <path d="M10.6 .8H14.6V5.4H10.6Z" fill="#1f1e20" /><path d="M11.2 1.4H14.2L11.2 4.8H14.4" stroke="#fff" strokeWidth="1.1" />
        </Svg>
      </Cell>
    </footer>
  );
}

export default function App() {
  return (
    <div className="flex h-[1080px] w-[1920px] flex-col overflow-hidden font-['Open_Sans','Noto_Sans',sans-serif]">
      <TabBar />
      <Toolbar />
      <div className="flex min-h-0 grow">
        <div className="flex grow flex-col border-t border-r border-[#748291]">
          <Page />
        </div>
        <Sidebar />
      </div>
      <Taskbar />
    </div>
  );
}
